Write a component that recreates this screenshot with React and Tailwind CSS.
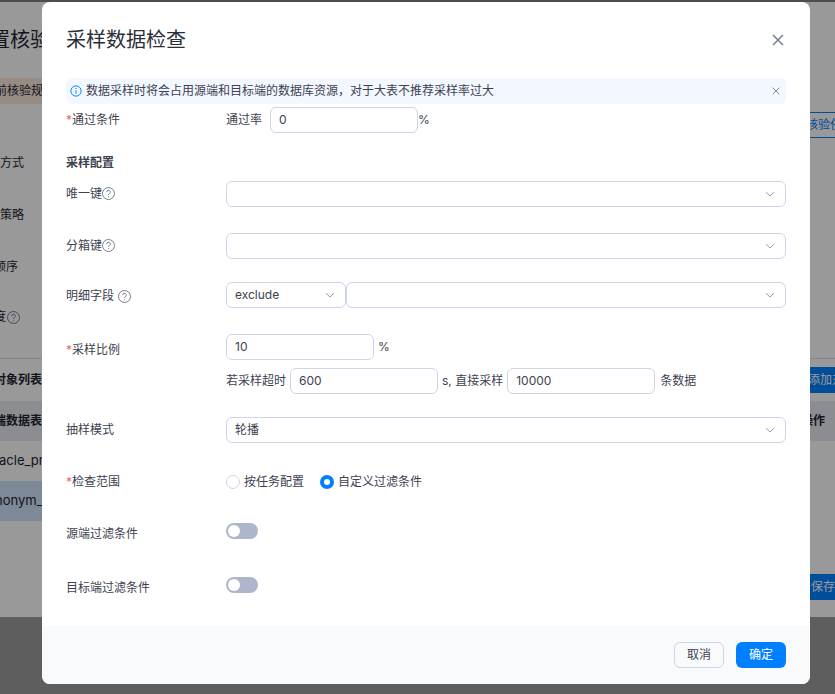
const FONT = "font-['Inter','Noto_Sans_CJK_SC',sans-serif]";

function Chevron({ className = "" }) {
  return (
    <svg viewBox="0 0 12 12" className={"h-3 w-3 text-[#8a93ab] " + className} fill="none" stroke="currentColor" strokeWidth="0.9">
      <path d="M2 4.2 6 8l4-3.8" />
    </svg>
  );
}

function Help({ className = "" }) {
  return (
    <svg viewBox="0 0 13 13" className={"h-[13px] w-[13px] text-[#5c6270] " + className} fill="none" stroke="currentColor" strokeWidth="0.8">
      <circle cx="6.5" cy="6.5" r="6" />
      <path d="M4.7 5.1a1.8 1.8 0 1 1 2.7 1.5c-.6.4-.9.7-.9 1.4" />
      <circle cx="6.5" cy="9.7" r="0.5" fill="currentColor" stroke="none" />
    </svg>
  );
}

function Close({ className = "", w = 1.2 }) {
  return (
    <svg viewBox="0 0 12 12" className={className} fill="none" stroke="currentColor" strokeWidth={w}>
      <path d="M1 1l10 10M11 1 1 11" />
    </svg>
  );
}

function Box({ className = "", children, chevron, pad = "pl-2" }) {
  return (
    <div className={"flex h-[26px] items-center justify-between rounded-md border border-[#cdd5e8] bg-white text-xs text-[#3d4250] " + pad + " " + className}>
      <span>{children}</span>
      {chevron && <Chevron className="mr-[9px] shrink-0" />}
    </div>
  );
}

function Star() {
  return <span className="text-[#f0626a]">*</span>;
}

function Label({ children, className = "" }) {
  return <div className={"flex w-40 shrink-0 items-center text-xs text-[#3d4250] " + className}>{children}</div>;
}

function Toggle() {
  return (
    <div className="flex h-4 w-8 items-center rounded-full bg-[#aeb6cc] pl-0.5">
      <div className="h-3 w-3 rounded-full bg-white" />
    </div>
  );
}

function Backdrop() {
  return (
    <div className="flex h-full w-full flex-col text-[#1f2430]">
      <div className="h-0.5 bg-[#7c8088]" />
      <div className="flex h-[615px] flex-col bg-white">
        <div className="ml-[-10px] mt-[26px] h-[24px] text-xl leading-[24px]">置核验</div>
        <div className="mt-[26px] flex h-[26px] justify-between">
          <div className="flex h-full w-[60px] items-center bg-[#fbeadb] text-xs"><span className="ml-[-5px]">前核验规</span></div>
          <div className="mr-[-10px] mt-[34px] flex h-[26px] w-[40px] items-center whitespace-nowrap border border-[#0080ff] text-xs text-[#0080ff]">核验任务</div>
        </div>
        <div className="mt-[51px] h-4 text-xs leading-4">方式</div>
        <div className="mt-9 h-4 text-xs leading-4">策略</div>
        <div className="ml-[-6px] mt-9 h-4 text-xs leading-4">顺序</div>
        <div className="mt-[34px] flex h-4 items-center text-xs leading-4">
          <span className="ml-[-6px]">度</span>
          <Help className="ml-px" />
        </div>
        <div className="mt-[33px] h-px bg-[#d8dde8]" />
        <div className="mt-2 flex h-[26px] items-center justify-between">
          <span className="ml-[-6px] text-xs font-semibold">对象列表</span>
          <div className="flex h-full w-[28px] items-center overflow-hidden whitespace-nowrap bg-[#0080ff] pl-[1px] text-xs text-white">添加对象</div>
        </div>
        <div className="mt-2 flex h-10 items-center justify-between bg-[#eaecf0] text-xs font-semibold">
          <span className="ml-[-6px]">端数据表</span>
          <span className="mr-[10px]">操作</span>
        </div>
        <div className="flex h-10 items-center text-[13px]"><span className="ml-[-1px]">acle_pr</span></div>
        <div className="flex h-10 w-[60px] items-center bg-[#d0e5fa] text-[13px]"><span className="ml-[-5px]">nonym_</span></div>
        <div className="mt-[53px] flex h-[26px] justify-end">
          <div className="flex w-[25px] items-center overflow-hidden whitespace-nowrap bg-[#0080ff] pl-px text-xs text-white">保存并</div>
        </div>
      </div>
    </div>
  );
}

export default function App() {
  return (
    <div className={"relative h-[694px] w-[835px] overflow-hidden bg-[#9d9d9d] " + FONT}>
      <Backdrop />
      <div className="absolute inset-0 bg-[#000000]/40" />
      <div className="absolute left-[42px] top-0.5 flex h-[682px] w-[768px] flex-col overflow-hidden rounded-lg bg-white">
        <div className="flex-1 px-6 pt-6">
          <div className="flex h-7 items-center justify-between">
            <span className="text-xl leading-7 text-[#2b2f3a]">采样数据检查</span>
            <Close className="mr-0.5 h-3 w-3 text-[#767d90]" w={1.5} />
          </div>

          <div className="mt-6 flex h-[26px] items-center rounded-md bg-[#f3f7ff] pl-1 pr-1.5 text-xs text-[#3d4250]">
            <svg viewBox="0 0 14 14" className="mr-1 h-3 w-3 text-[#0080ff]" fill="none" stroke="currentColor" strokeWidth="1.1">
              <circle cx="7" cy="7" r="6" />
              <path d="M7 6v4.2" />
              <circle cx="7" cy="4" r="0.8" fill="currentColor" stroke="none" />
            </svg>
            <span className="flex-1">数据采样时将会占用源端和目标端的数据库资源，对于大表不推荐采样率过大</span>
            <Close className="h-2 w-2 text-[#5c6270]" w={1.1} />
          </div>

          <div className="mt-[3px] flex h-[26px] items-center">
            <Label><Star />通过条件</Label>
            <span className="text-xs text-[#3d4250]">通过率</span>
            <Box className="ml-2 w-[148px]">0</Box>
            <span className="text-xs text-[#3d4250]">%</span>
          </div>

          <div className="mt-[22px] text-xs font-semibold leading-4 text-[#3d4250]">采样配置</div>

          <div className="mt-2.5 flex h-[26px] items-center">
            <Label>唯一键<Help className="-translate-y-px" /></Label>
            <Box className="flex-1" chevron />
          </div>

          <div className="mt-[26px] flex h-[26px] items-center">
            <Label>分箱键<Help className="-translate-y-px" /></Label>
            <Box className="flex-1" chevron />
          </div>

          <div className="mt-[23px] flex h-[26px] items-center">
            <Label className="translate-y-px">明细字段<Help className="ml-1" /></Label>
            <Box className="w-[120px]" chevron>exclude</Box>
            <Box className="flex-1" chevron />
          </div>

          <div className="mt-[26px] flex">
            <Label className="h-[26px] translate-y-[3px] self-start"><Star />采样比例</Label>
            <div className="flex flex-col gap-2 text-xs text-[#3d4250]">
              <div className="flex items-center">
                <Box className="w-[148px]">10</Box>
                <span className="ml-1">%</span>
              </div>
              <div className="flex items-center">
                <span>若采样超时</span>
                <Box className="mx-1 w-[148px]">600</Box>
                <span>s, 直接采样</span>
                <Box className="ml-1 mr-[5px] w-[148px]">10000</Box>
                <span>条数据</span>
              </div>
            </div>
          </div>

          <div className="mt-[23px] flex h-[26px] items-center">
            <Label>抽样模式</Label>
            <Box className="flex-1" chevron>轮播</Box>
          </div>

          <div className="mt-[26px] flex h-[26px] items-center text-xs text-[#3d4250]">
            <Label><Star />检查范围</Label>
            <div className="flex items-center gap-1">
              <span className="h-3.5 w-3.5 rounded-full border border-[#cdd5e8] bg-white" />
              <span>按任务配置</span>
            </div>
            <div className="ml-4 flex items-center gap-1">
              <span className="flex h-3.5 w-3.5 items-center justify-center rounded-full bg-[#0080ff]">
                <span className="h-1.5 w-1.5 rounded-full bg-white" />
              </span>
              <span>自定义过滤条件</span>
            </div>
          </div>

          <div className="mt-7 flex h-[26px]">
            <Label className="h-[22px]">源端过滤条件</Label>
            <Toggle />
          </div>

          <div className="mt-7 flex h-[26px]">
            <Label className="h-[22px]">目标端过滤条件</Label>
            <Toggle />
          </div>
        </div>

        <div className="flex h-[58px] items-center justify-end gap-3 bg-[#f9fafc] px-6">
          <button className="flex h-[26px] w-[50px] items-center justify-center rounded-md border border-[#cdd5e8] bg-transparent text-xs text-[#3d4250]">取消</button>
          <button className="flex h-[26px] w-[50px] items-center justify-center rounded-md bg-[#0080ff] text-xs text-white">确定</button>
        </div>
      </div>
    </div>
  );
}
